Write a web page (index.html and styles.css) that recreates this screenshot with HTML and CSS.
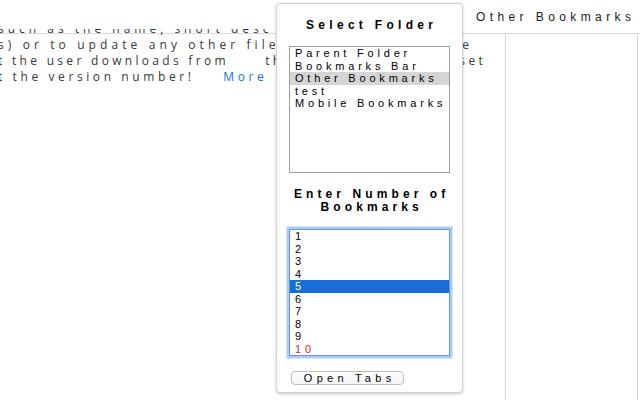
FILE: index.html
```html
<!DOCTYPE html>
<html lang="en">
<head>
<meta charset="utf-8">
<title>Open Bookmarks</title>
<link rel="stylesheet" href="styles.css">
</head>
<body>
<div class="page">
  <header class="topbar">
    <span class="folder-label">Other Bookmarks</span>
  </header>
  <main class="main">
    <section class="content">
      <p class="desc">
        <span class="line"><span>such as the name, short desc</span></span>
        <span class="line line-wide"><span>s) or to update any other files</span><span class="tail tail-short">sure</span></span>
        <span class="line line-tight"><span>t the user downloads from <span class="spread">th</span></span><span class="tail">set</span></span>
        <span class="line line-last"><span>t the version number! <a class="link" href="#">More</a></span></span>
      </p>
    </section>
    <aside class="side"></aside>
  </main>
</div>

<div class="popup">
  <h2 class="popup-title">Select Folder</h2>
  <div class="listbox" role="listbox" aria-label="Select Folder">
    <div class="option" role="option">Parent Folder</div>
    <div class="option" role="option">Bookmarks Bar</div>
    <div class="option option-picked" role="option" aria-selected="true">Other Bookmarks</div>
    <div class="option" role="option">test</div>
    <div class="option" role="option">Mobile Bookmarks</div>
  </div>

  <h2 class="popup-title popup-title-second">Enter Number of<br>Bookmarks</h2>
  <div class="listbox listbox-focused" role="listbox" aria-label="Enter Number of Bookmarks">
    <div class="option" role="option">1</div>
    <div class="option" role="option">2</div>
    <div class="option" role="option">3</div>
    <div class="option" role="option">4</div>
    <div class="option option-active" role="option" aria-selected="true">5</div>
    <div class="option" role="option">6</div>
    <div class="option" role="option">7</div>
    <div class="option" role="option">8</div>
    <div class="option" role="option">9</div>
    <div class="option option-max" role="option">10</div>
  </div>

  <button class="open-btn" type="button">Open Tabs</button>
</div>
</body>
</html>
```

FILE: styles.css
```css
html, body {
  margin: 0;
  padding: 0;
  width: 640px;
  height: 400px;
  overflow: hidden;
  background: #ffffff;
}

.page {
  display: flex;
  flex-direction: column;
  width: 640px;
  height: 400px;
}

.topbar {
  height: 29px;
  flex: none;
  box-sizing: border-box;
  padding: 10px 0 0 476px;
  background: #ffffff;
  font-family: "Liberation Sans", Arial, sans-serif;
  font-size: 12px;
  line-height: 14px;
  letter-spacing: 4.4px;
  color: #1a1a1a;
  white-space: nowrap;
}

.main {
  flex: 1;
  display: flex;
  overflow: hidden;
  background: linear-gradient(#d9d9d9, #d9d9d9) 0 4px / 100% 1px no-repeat;
}

.content {
  width: 505px;
  flex: none;
  overflow: hidden;
}

.desc {
  margin: -7.7px 0 0 -2px;
  width: 488px;
  font-family: "Open Sans", sans-serif;
  font-size: 12px;
  line-height: 16px;
  letter-spacing: 4px;
  color: #383838;
}

.line {
  display: flex;
  justify-content: space-between;
  white-space: nowrap;
}

.line-wide {
  letter-spacing: 4.1px;
}

.line-tight {
  letter-spacing: 3.3px;
}

.line-last {
  letter-spacing: 3.6px;
}

.spread {
  margin-left: 30px;
}

.tail-short {
  margin-right: 13px;
}

.link {
  margin-left: 22px;
  color: #1a6fe0;
  text-decoration: none;
}

.side {
  width: 133px;
  flex: none;
  box-sizing: border-box;
  margin-top: 4px;
  border-left: 1px solid #d9d9d9;
  border-right: 1px solid #d9d9d9;
}

/* popup */
.popup {
  position: absolute;
  left: 276px;
  top: 3px;
  width: 187px;
  height: 390px;
  box-sizing: border-box;
  display: flex;
  flex-direction: column;
  padding: 14px 12px 0;
  background: #ffffff;
  border: 1px solid #d2d2d2;
  border-radius: 4px;
  box-shadow: 0 1px 3px rgba(0, 0, 0, 0.22);
  font-family: "Liberation Sans", Arial, sans-serif;
  color: #000000;
}

.popup-title {
  margin: 0;
  padding-left: 4.3px;
  font-size: 12px;
  font-weight: bold;
  line-height: 14px;
  letter-spacing: 4.3px;
  text-align: center;
  white-space: nowrap;
}

.popup-title-second {
  margin-top: 14.5px;
  line-height: 13.5px;
  letter-spacing: 4.1px;
}

.listbox {
  margin-top: 14px;
  height: 127px;
  box-sizing: border-box;
  border: 1px solid #9c9c9c;
  background: #ffffff;
  overflow: hidden;
}

.listbox-focused {
  margin-top: 14.5px;
  border-color: #5f97e6;
  box-shadow: 0 0 0 2.5px rgba(120, 168, 238, 0.6);
}

.option {
  height: 12.5px;
  padding-left: 5px;
  font-size: 11px;
  line-height: 12.5px;
  letter-spacing: 3.8px;
  white-space: nowrap;
  color: #000000;
}

.option-picked {
  background: #d5d5d5;
}

.option-active {
  background: #1a6dd6;
  color: #ffffff;
}

.option-max {
  color: #e8231b;
}

.open-btn {
  align-self: flex-start;
  margin: 15px 0 0 2px;
  width: 113px;
  height: 14px;
  padding: 0 0 0 4.3px;
  box-sizing: border-box;
  border: 1px solid #bdbdbd;
  border-radius: 4px;
  background: linear-gradient(#ffffff, #f5f5f5);
  font-family: "Liberation Sans", Arial, sans-serif;
  font-size: 11px;
  line-height: 12px;
  letter-spacing: 4.3px;
  color: #000000;
  text-align: center;
}
```
